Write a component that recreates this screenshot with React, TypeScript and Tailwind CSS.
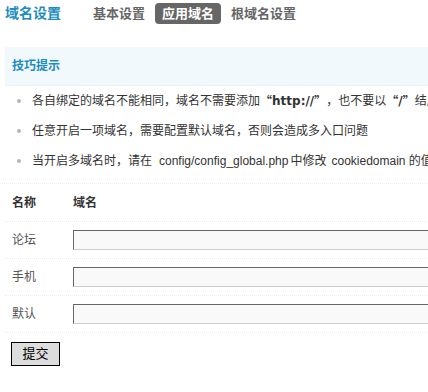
const cjk = "font-['Liberation_Sans','Noto_Sans_CJK_SC',sans-serif]"
const quote = "font-['Noto_Sans_CJK_SC',sans-serif] font-bold"
const latinBold = "font-['DejaVu_Sans',sans-serif] font-bold"

function Tab({ label, active = false }: { readonly label: string; readonly active?: boolean }) {
  return (
    <span
      className={`px-[7px] h-[21px] flex items-center rounded-[4px] text-[13px] font-bold ${
        active ? 'bg-[#666] text-white' : 'text-[#666]'
      }`}
    >
      {label}
    </span>
  )
}

function Tip({ children }: { readonly children: React.ReactNode }) {
  return (
    <li className="h-[30px] flex items-center whitespace-nowrap text-[#333]">
      <span className="w-[4px] h-[4px] rounded-full bg-[#b5b5b5] ml-[17px] mr-[11px] shrink-0" />
      {children}
    </li>
  )
}

function FieldRow({ label }: { readonly label: string }) {
  return (
    <div className="flex items-center h-[37px] border-b border-dotted border-[#deeffb]">
      <span className="w-[68px] pl-[7px] text-[#555]">{label}</span>
      <input
        type="text"
        className="w-[420px] h-[20px] border border-solid border-t-[#666] border-l-[#666] border-r-[#ccc] border-b-[#ccc] bg-[#f9f9f9] shrink-0"
      />
    </div>
  )
}

export default function App() {
  return (
    <div className={`w-[428px] h-[392px] overflow-hidden bg-white text-[12px] ${cjk}`}>
      {/* Title + tabs */}
      <div className="flex items-center pt-[3px] h-[24px]">
        <h3 className="ml-[5px] text-[14px] font-bold text-[#1b8dbf]">域名设置</h3>
        <div className="flex items-center gap-[3px] ml-[25px]">
          <Tab label="基本设置" />
          <Tab label="应用域名" active />
          <Tab label="根域名设置" />
        </div>
      </div>

      {/* Tips */}
      <div className="ml-[5px] mt-[23px] w-[600px]">
        <div className="h-[39px] bg-[#f2f9fd] border-b border-dotted border-[#deeffb] flex items-center pl-[7px]">
          <span className="font-bold text-[#1b8dbf]">技巧提示</span>
        </div>
        <ul className="pb-[7px] border-b border-dotted border-[#deeffb] -ml-[5px]">
          <Tip>
            各自绑定的域名不能相同，域名不需要添加
            <span className={quote}>“</span>
            <span className={latinBold}>http://</span>
            <span className={quote}>”</span>，也不要以
            <span className={quote}>“</span>
            <span className={latinBold}>/</span>
            <span className={quote}>”</span>结尾
          </Tip>
          <Tip>任意开启一项域名，需要配置默认域名，否则会造成多入口问题</Tip>
          <Tip>
            当开启多域名时，请在
            <span className="ml-[7px] mr-[2px]">config/config_global.php</span>
            中修改
            <span className="ml-[5px]">cookiedomain 的值</span>
          </Tip>
        </ul>

        {/* Table */}
        <div className="flex items-center h-[38px] border-b border-dotted border-[#deeffb] font-bold text-[#333]">
          <span className="w-[68px] pl-[7px]">名称</span>
          <span>域名</span>
        </div>
        <FieldRow label="论坛" />
        <FieldRow label="手机" />
        <FieldRow label="默认" />

        <button
          type="button"
          className="mt-[9px] ml-[6px] w-[49px] h-[24px] bg-[#ddd] border border-black text-[13px] text-black"
        >
          提交
        </button>
      </div>
    </div>
  )
}
